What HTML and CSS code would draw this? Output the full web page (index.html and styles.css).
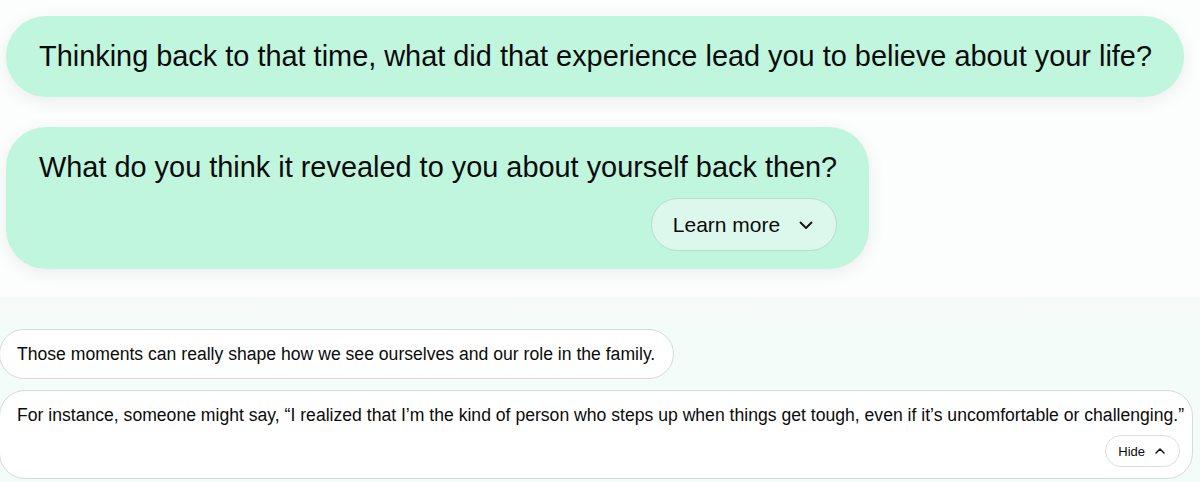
FILE: index.html
```html
<!DOCTYPE html>
<html>
<head>
<meta charset="utf-8">
<link rel="stylesheet" href="styles.css">
</head>
<body>
<section class="top">
  <div class="bubble green">
    <p class="q">Thinking back to that time, what did that experience lead you to believe about your life?</p>
  </div>
  <div class="bubble green">
    <p class="q">What do you think it revealed to you about yourself back then?</p>
    <div class="actions">
      <button class="learn">Learn more
        <svg width="16" height="16" viewBox="0 0 16 16"><path d="M2.5 5.5 L8 11 L13.5 5.5" fill="none" stroke="#111" stroke-width="1.8" stroke-linecap="round" stroke-linejoin="round"/></svg>
      </button>
    </div>
  </div>
</section>
<section class="bottom">
  <div class="card short">
    <p class="t">Those moments can really shape how we see ourselves and our role in the family.</p>
  </div>
  <div class="card long">
    <p class="t">For instance, someone might say, “I realized that I’m the kind of person who steps up when things get tough, even if it’s uncomfortable or challenging.”</p>
    <div class="actions small">
      <button class="hide">Hide
        <svg width="12" height="12" viewBox="0 0 12 12"><path d="M2 8 L6 4 L10 8" fill="none" stroke="#111" stroke-width="1.5" stroke-linecap="round" stroke-linejoin="round"/></svg>
      </button>
    </div>
  </div>
</section>
</body>
</html>
```

FILE: styles.css
```css
* { box-sizing: border-box; }
html, body {
  margin: 0;
  padding: 0;
  width: 1200px;
  height: 482px;
  overflow: hidden;
  font-family: "Liberation Sans", Arial, Helvetica, sans-serif;
  color: #0b0b0b;
  background: #f4fbf8;
}
p { margin: 0; }

.top {
  background: #fcfefd;
  padding: 16px 6px 28px;
  display: flex;
  flex-direction: column;
  align-items: flex-start;
  gap: 30px;
  height: 297px;
}
.bubble.green {
  background: #c0f5de;
  border-radius: 40px;
  padding: 24px 32px 24px 33px;
  box-shadow: 0 4px 18px rgba(0, 0, 0, 0.07);
}
.q {
  font-size: 28.9px;
  line-height: 33px;
  white-space: nowrap;
}
.actions {
  display: flex;
  justify-content: flex-end;
  margin-top: 14px;
}
.bubble.green:nth-child(2) { padding-bottom: 18px; }
.learn {
  font-family: inherit;
  font-size: 21px;
  color: #0b0b0b;
  height: 53px;
  padding: 0 22px 0 21px;
  border-radius: 27px;
  border: 1px solid #b9dccb;
  background: #dcf8ec;
  display: flex;
  align-items: center;
  gap: 18px;
}

.bottom {
  padding: 32px 0 0;
  display: flex;
  flex-direction: column;
  align-items: flex-start;
  gap: 11px;
  background: linear-gradient(#f6faf8, #f3fcf9 40px);
  height: 185px;
}
.card {
  background: #ffffff;
  border: 1px solid #d6dbd9;
  border-radius: 26px;
  margin-left: -1px;
}
.card.short {
  height: 50px;
  display: flex;
  align-items: center;
  padding: 0 18px 0 17px;
}
.card.long {
  width: 1194px;
  padding: 14px 12px 10px 17px;
  height: 89px;
}
.t {
  font-size: 17.6px;
  line-height: 20px;
  white-space: nowrap;
}
.actions.small { margin-top: 10px; }
.hide {
  font-family: inherit;
  font-size: 13px;
  color: #0b0b0b;
  height: 32px;
  padding: 0 13px 0 12px;
  border-radius: 16px;
  border: 1px solid #dcdfde;
  background: #ffffff;
  display: flex;
  align-items: center;
  gap: 9px;
}
```
